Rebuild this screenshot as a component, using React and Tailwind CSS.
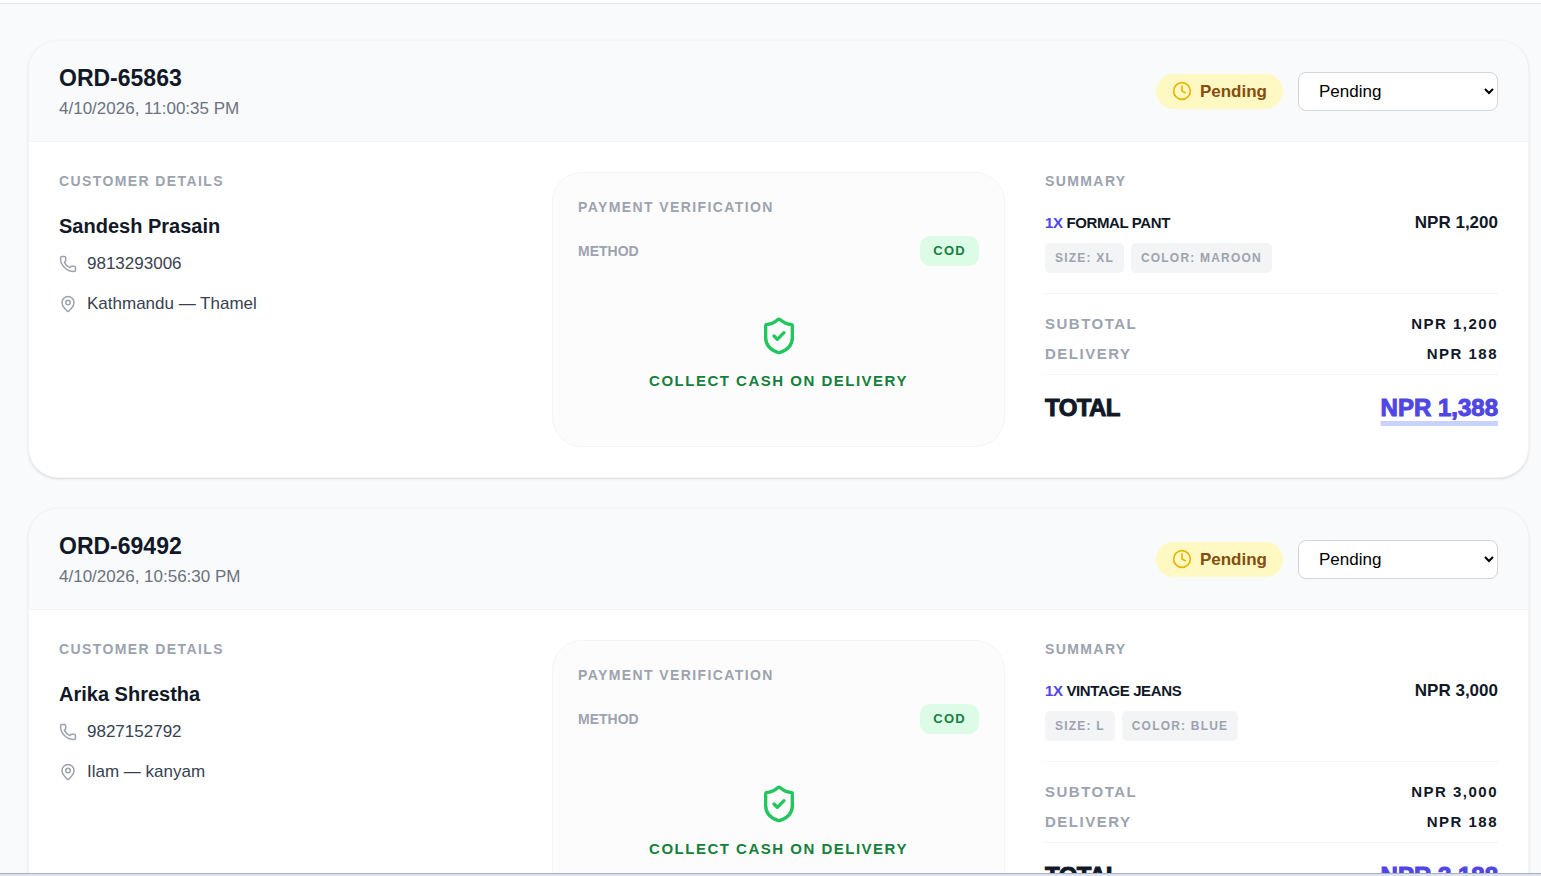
import React, { useState } from "react";
import { Clock, MapPin, Phone, ShieldCheck } from "lucide-react";

const initialOrders = [
    {
        id: "ORD-65863",
        date: "4/10/2026, 11:00:35 PM",
        status: "Pending",
        customer: "Sandesh Prasain",
        phone: "9813293006",
        address: "Kathmandu — Thamel",
        method: "COD",
        items: [
            { name: "Formal Pant", qty: 1, price: 1200, size: "XL", color: "Maroon" },
        ],
        delivery: 188,
    },
    {
        id: "ORD-69492",
        date: "4/10/2026, 10:56:30 PM",
        status: "Pending",
        customer: "Arika Shrestha",
        phone: "9827152792",
        address: "Ilam — kanyam",
        method: "COD",
        items: [
            { name: "Vintage Jeans", qty: 1, price: 3000, size: "L", color: "Blue" },
        ],
        delivery: 188,
    },
];

const statuses = ["Pending", "Processing", "Shipped", "Delivered", "Cancelled"];

const npr = (amount) => `NPR ${amount.toLocaleString("en-US")}`;

function SectionTitle({ children }) {
    return (
        <h4 className="text-[14px] leading-[18px] font-black uppercase tracking-widest text-[#9ca3af]">
            {children}
        </h4>
    );
}

function Tag({ children }) {
    return (
        <span className="rounded-[5px] bg-gray-100 px-[10px] text-[12px] leading-[30px] font-black uppercase tracking-widest text-[#9ca3af]">
            {children}
        </span>
    );
}

function OrderCard({ order, onStatusChange }) {
    const subtotal = order.items.reduce(
        (sum, item) => sum + item.price * item.qty,
        0
    );

    return (
        <article className="shrink-0 overflow-hidden rounded-[30px] border border-gray-100 bg-white shadow-sm">
            <div className="flex items-center justify-between border-b border-gray-100 bg-gray-50 px-[30px] py-5">
                <div>
                    <h3 className="text-[23px] leading-[35px] font-bold text-[#111827]">
                        {order.id}
                    </h3>
                    <p className="text-[17px] leading-[25px] text-[#6b7280]">
                        {order.date}
                    </p>
                </div>
                <div className="flex items-center gap-[15px]">
                    <span className="flex items-center gap-2 rounded-full bg-[#fef9c3] px-4 py-[5px] text-[17px] leading-[25px] font-bold text-[#854d0e]">
                        <Clock size={20} className="text-[#eab308]" />
                        {order.status}
                    </span>
                    <select
                        aria-label={`Status of ${order.id}`}
                        value={order.status}
                        onChange={(e) => onStatusChange(order.id, e.target.value)}
                        className="h-[39px] w-[200px] rounded-lg border border-gray-300 bg-white px-4 text-[17px] text-black"
                    >
                        {statuses.map((status) => (
                            <option key={status} value={status}>
                                {status}
                            </option>
                        ))}
                    </select>
                </div>
            </div>

            <div className="grid grid-cols-3 gap-10 p-[30px]">
                <div>
                    <SectionTitle>Customer Details</SectionTitle>
                    <p className="mt-6 text-[20px] leading-[25px] font-bold text-[#111827]">
                        {order.customer}
                    </p>
                    <p className="mt-3 flex items-center gap-[10px] text-[17px] leading-[25px] text-[#374151]">
                        <Phone size={18} className="text-[#9ca3af]" />
                        {order.phone}
                    </p>
                    <p className="mt-[15px] flex items-center gap-[10px] text-[17px] leading-[25px] text-[#374151]">
                        <MapPin size={18} className="text-[#9ca3af]" />
                        {order.address}
                    </p>
                </div>

                <div className="rounded-[30px] border border-gray-100 bg-[#fcfcfc] p-[25px]">
                    <SectionTitle>Payment Verification</SectionTitle>
                    <div className="mt-5 flex items-center justify-between">
                        <span className="text-[14px] font-bold uppercase text-[#9ca3af]">
                            Method
                        </span>
                        <span className="rounded-[10px] bg-[#dcfce7] px-[13px] text-[13px] leading-[30px] font-black uppercase tracking-widest text-[#15803d]">
                            {order.method}
                        </span>
                    </div>
                    <div className="mt-5 flex flex-col items-center gap-[15px] py-[30px]">
                        <ShieldCheck size={40} className="text-[#22c55e]" />
                        <p className="text-[15px] leading-5 font-bold uppercase tracking-widest text-[#15803d]">
                            Collect Cash on Delivery
                        </p>
                    </div>
                </div>

                <div>
                    <SectionTitle>Summary</SectionTitle>
                    {order.items.map((item) => (
                        <div key={item.name} className="mt-5">
                            <div className="flex items-center justify-between leading-[25px] font-bold text-[#111827]">
                                <span className="text-[15px] uppercase tracking-tight">
                                    <span className="text-[#4f46e5]">{item.qty}x</span>{" "}
                                    {item.name}
                                </span>
                                <span className="text-[17px]">{npr(item.price)}</span>
                            </div>
                            <div className="mt-2 flex gap-[7px]">
                                <Tag>Size: {item.size}</Tag>
                                <Tag>Color: {item.color}</Tag>
                            </div>
                        </div>
                    ))}
                    <dl className="mt-5 flex flex-col gap-[10px] border-y border-gray-100 pt-5 pb-[10px] text-[15px] leading-5 font-bold uppercase tracking-widest">
                        <div className="flex justify-between">
                            <dt className="text-[#9ca3af]">Subtotal</dt>
                            <dd className="text-[#111827]">{npr(subtotal)}</dd>
                        </div>
                        <div className="flex justify-between">
                            <dt className="text-[#9ca3af]">Delivery</dt>
                            <dd className="text-[#111827]">{npr(order.delivery)}</dd>
                        </div>
                    </dl>
                    <div className="mt-[15px] flex justify-between text-[24px] leading-[35px] font-black text-[#111827] [-webkit-text-stroke:1px]">
                        <span className="uppercase tracking-tight">Total</span>
                        <span className="text-[#4f46e5] underline decoration-[#c7d2fe] decoration-[5px] underline-offset-[5px]">
                            {npr(subtotal + order.delivery)}
                        </span>
                    </div>
                </div>
            </div>
        </article>
    );
}

export default function App() {
    const [orders, setOrders] = useState(initialOrders);

    const handleStatusChange = (id, status) => {
        setOrders(orders.map((o) => (o.id === id ? { ...o, status } : o)));
    };

    return (
        <div className="flex h-screen flex-col bg-gray-50 font-['Liberation_Sans',Arial,sans-serif]">
            <header className="h-1 shrink-0 border-b border-gray-200 bg-white" />
            <main className="flex min-h-0 flex-1 flex-col gap-[30px] overflow-hidden pt-9 pr-3 pl-7">
                {orders.map((order) => (
                    <OrderCard
                        key={order.id}
                        order={order}
                        onStatusChange={handleStatusChange}
                    />
                ))}
            </main>
            <footer className="h-[3px] shrink-0 border-t border-[#a9afbd] bg-[#dbe1ee]" />
        </div>
    );
}
